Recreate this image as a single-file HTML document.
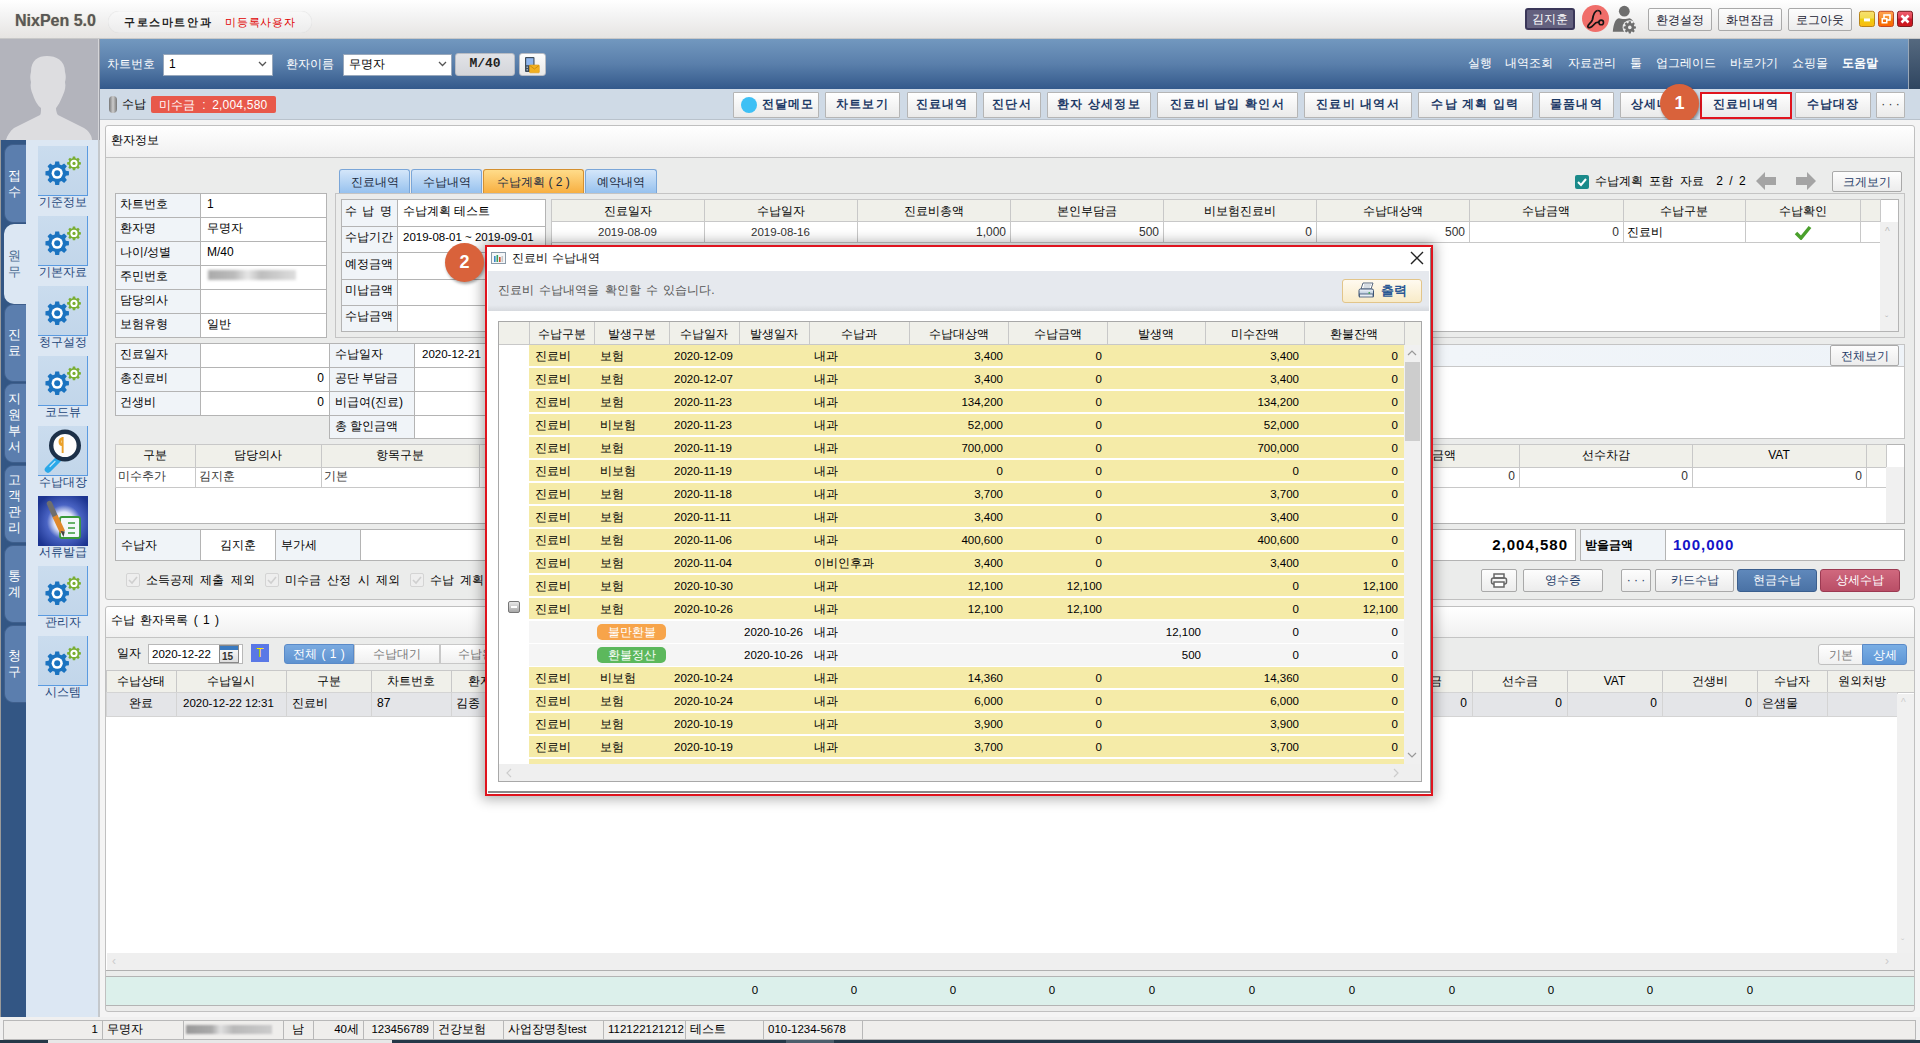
<!DOCTYPE html><html><head><meta charset="utf-8"><style>
*{margin:0;padding:0;box-sizing:border-box}
html,body{width:1920px;height:1043px;overflow:hidden}
body{position:relative;background:#f2f2f2;font-family:"Liberation Sans",sans-serif;font-size:12px;color:#000}
.a{position:absolute}
.t{white-space:nowrap;line-height:16px;height:16px}
.btn{background:linear-gradient(#fdfdfd,#ececec);border:1px solid #a9a9a9;border-radius:2px}
.tb{background:linear-gradient(#ffffff,#eaeaea);border:1px solid #b5b5b5;border-radius:1px}
.tbt{color:#1d3a66;font-weight:bold;font-size:12px;letter-spacing:1.2px}
.cell{border:1px solid #b4b4b4}
.lab{background:#f0f4f8}
.val{background:#fff}
.gh{background:#f0f0ea}
</style></head><body>
<div class="a " style="left:0px;top:0px;width:1920px;height:39px;background:linear-gradient(#ffffff,#f4f4f4 40%,#e6e4e2);border-bottom:1px solid #c8c8c8;"></div>
<div class="a t " style="left:15px;top:13px;font-size:16px;font-weight:bold;color:#585858;text-shadow:0 0 1px #b8a07a;">NixPen 5.0</div>
<div class="a " style="left:108px;top:11px;width:204px;height:22px;background:linear-gradient(#f9f9f9,#ececec);border-radius:11px;box-shadow:inset 0 0 1px #ccc;"></div>
<div class="a t " style="left:124px;top:14px;letter-spacing:1.6px;color:#222;font-size:11px;font-weight:bold;">구로스마트안과</div>
<div class="a t " style="left:225px;top:14px;letter-spacing:0.8px;color:#e00000;font-size:11px;">미등록사용자</div>
<div class="a " style="left:1525px;top:8px;width:50px;height:22px;background:#63607e;border:2px solid #3a3658;border-radius:3px;"></div>
<div class="a t " style="left:1525px;top:11px;width:50px;text-align:center;color:#fff;">김지훈</div>
<div class="a " style="left:1582px;top:5px;width:27px;height:27px;background:#f06e6a;border-radius:50%;"></div>
<svg class="a" style="left:1582px;top:5px" width="27" height="27" viewBox="0 0 27 27"><path d="M15.5 5.5 C12 6.5 11 11 10.5 14.5 C9.5 18 6 19 5.8 21.5 C6 23.5 9 23 11.5 20 C13 18 15 17 17.2 17.2" fill="none" stroke="#141414" stroke-width="1.8"/><path d="M15.5 5.5 C18 5.5 19 7 18.6 9.5" fill="none" stroke="#141414" stroke-width="1.5"/><circle cx="19.2" cy="17.4" r="2.3" fill="none" stroke="#141414" stroke-width="1.6"/></svg>
<svg class="a" style="left:1610px;top:4px" width="30" height="30" viewBox="0 0 30 30"><circle cx="14.3" cy="7.2" r="5.4" fill="#6e6e6e"/><path d="M2.8 27.8 C3.5 19 6 14.5 9 14.2 C11 15.2 17 15.2 19.5 14.2 C22 15 23.5 17 24 19 L19 27.8 Z" fill="#6e6e6e"/><circle cx="19.8" cy="23.4" r="7.2" fill="#ececec"/><path d="M24.23 22.15 L25.92 22.38 L25.92 24.42 L24.23 24.65 L23.81 25.65 L24.84 27.00 L23.40 28.44 L22.05 27.41 L21.05 27.83 L20.82 29.52 L18.78 29.52 L18.55 27.83 L17.55 27.41 L16.20 28.44 L14.76 27.00 L15.79 25.65 L15.37 24.65 L13.68 24.42 L13.68 22.38 L15.37 22.15 L15.79 21.15 L14.76 19.80 L16.20 18.36 L17.55 19.39 L18.55 18.97 L18.78 17.28 L20.82 17.28 L21.05 18.97 L22.05 19.39 L23.40 18.36 L24.84 19.80 L23.81 21.15 Z" fill="#6e6e6e"/><circle cx="19.8" cy="23.4" r="1.8" fill="#ececec"/></svg>
<div class="a btn" style="left:1648px;top:8px;width:64px;height:23px;"></div>
<div class="a t " style="left:1648px;top:11.5px;width:64px;text-align:center;color:#223;">환경설정</div>
<div class="a btn" style="left:1718px;top:8px;width:64px;height:23px;"></div>
<div class="a t " style="left:1718px;top:11.5px;width:64px;text-align:center;color:#223;">화면잠금</div>
<div class="a btn" style="left:1788px;top:8px;width:64px;height:23px;"></div>
<div class="a t " style="left:1788px;top:11.5px;width:64px;text-align:center;color:#223;">로그아웃</div>
<svg class="a" style="left:1858px;top:10px" width="57" height="18" viewBox="0 0 57 18"><defs><linearGradient id="gy" x1="0" y1="0" x2="0" y2="1"><stop offset="0" stop-color="#f8e070"/><stop offset="0.45" stop-color="#f2dc50"/><stop offset="0.5" stop-color="#ecd010"/><stop offset="1" stop-color="#fcb810"/></linearGradient><linearGradient id="go" x1="0" y1="0" x2="0" y2="1"><stop offset="0" stop-color="#ffa050"/><stop offset="0.45" stop-color="#f89030"/><stop offset="0.5" stop-color="#f08010"/><stop offset="1" stop-color="#ff6400"/></linearGradient><linearGradient id="gr" x1="0" y1="0" x2="0" y2="1"><stop offset="0" stop-color="#f06070"/><stop offset="0.45" stop-color="#e04050"/><stop offset="0.5" stop-color="#c81830"/><stop offset="1" stop-color="#d01818"/></linearGradient></defs><rect x="1.5" y="1.3" width="15" height="15.2" rx="2" fill="url(#gy)" stroke="#b8841a"/><rect x="6" y="8.4" width="6" height="3" fill="#fff"/><rect x="20.5" y="1.3" width="15" height="15.2" rx="2" fill="url(#go)" stroke="#c04828"/><rect x="26" y="5" width="6" height="5" fill="none" stroke="#fff" stroke-width="1.6"/><rect x="23.5" y="8" width="6" height="5.5" fill="#fff"/><rect x="25" y="9.5" width="3" height="2.5" fill="#f07010"/><rect x="39.5" y="1.3" width="15" height="15.2" rx="2" fill="url(#gr)" stroke="#7a1c20"/><path d="M43.5 5.5 L50.5 12.5 M50.5 5.5 L43.5 12.5" stroke="#fff" stroke-width="2.6"/></svg>
<div class="a " style="left:0px;top:39px;width:99px;height:101px;background:#b3b4bc;"></div>
<svg class="a" style="left:0px;top:39px" width="99" height="101" viewBox="0 0 99 101"><path d="M47 17 C56 17 65 21 65 33 C66 36 66 40 65 43 C66 47 65 52 63 56 C60 63 58 67 56 69 C56 72 57 75 58 76 L84 89 C89 92 92 97 92 101 L6 101 C7 97 10 92 14 89 L40 76 C41 75 41 72 41 69 C38 67 35 62 33 56 C31 52 30 47 31 43 C30 40 30 36 31 33 C31 21 38 17 47 17 Z" fill="#dddde0"/></svg>
<div class="a " style="left:98px;top:39px;width:1px;height:101px;background:#d4d4d8;"></div>
<div class="a " style="left:99px;top:39px;width:1px;height:101px;background:#9a9ca4;"></div>
<div class="a " style="left:100px;top:39px;width:1808px;height:50px;background:linear-gradient(#7298bf,#5a7fab 50%,#33598b);"></div>
<div class="a " style="left:1908px;top:39px;width:12px;height:50px;background:linear-gradient(#55697f,#2f4560);border-left:1px solid #9aa8b8;"></div>
<div class="a t " style="left:107px;top:56px;color:#fff;">차트번호</div>
<div class="a " style="left:163px;top:54px;width:110px;height:22px;background:#fff;border:1px solid #98a8bc;"></div>
<div class="a t " style="left:169px;top:56px;">1</div>
<svg class="a" style="left:258px;top:61px" width="9" height="6" viewBox="0 0 9 6"><path d="M1 1 L4.5 4.5 L8 1" fill="none" stroke="#555" stroke-width="1.3"/></svg>
<div class="a t " style="left:286px;top:56px;color:#fff;">환자이름</div>
<div class="a " style="left:343px;top:54px;width:109px;height:22px;background:#fff;border:1px solid #98a8bc;"></div>
<div class="a t " style="left:349px;top:56px;">무명자</div>
<svg class="a" style="left:438px;top:61px" width="9" height="6" viewBox="0 0 9 6"><path d="M1 1 L4.5 4.5 L8 1" fill="none" stroke="#555" stroke-width="1.3"/></svg>
<div class="a " style="left:455px;top:53px;width:60px;height:23px;background:linear-gradient(#e2e3e7,#d3d5da);border:1px solid #b8bcc4;border-radius:3px;"></div>
<div class="a t " style="left:455px;top:56px;width:60px;text-align:center;font-family:Liberation Mono,monospace;font-weight:bold;color:#222;font-size:13px;">M/40</div>
<div class="a " style="left:519px;top:53px;width:27px;height:23px;background:linear-gradient(#fdfdfd,#e8e8e8);border:1px solid #b8bcc4;border-radius:3px;"></div>
<svg class="a" style="left:524px;top:56px" width="17" height="18" viewBox="0 0 17 18"><rect x="1" y="1" width="9.5" height="15" rx="1" fill="#3e4c5a"/><rect x="2.2" y="2.2" width="7.2" height="7" fill="#8fb6ee"/><rect x="2.5" y="10.5" width="1.5" height="1.5" fill="#9ab"/><rect x="2.5" y="13" width="1.5" height="1.5" fill="#9ab"/><rect x="5.5" y="9" width="9.8" height="7.8" rx="0.8" fill="#f2b020" stroke="#e09a10" stroke-width="0.6"/><path d="M5.8 9.5 L10.4 13 L15 9.5" fill="none" stroke="#c88a10" stroke-width="0.9"/></svg>
<div class="a t " style="left:1468px;top:55px;color:#fff;">실행</div>
<div class="a t " style="left:1505px;top:55px;color:#fff;">내역조회</div>
<div class="a t " style="left:1568px;top:55px;color:#fff;">자료관리</div>
<div class="a t " style="left:1630px;top:55px;color:#fff;">툴</div>
<div class="a t " style="left:1656px;top:55px;color:#fff;">업그레이드</div>
<div class="a t " style="left:1730px;top:55px;color:#fff;">바로가기</div>
<div class="a t " style="left:1792px;top:55px;color:#fff;">쇼핑몰</div>
<div class="a t " style="left:1842px;top:55px;color:#fff;font-weight:bold;">도움말</div>
<div class="a " style="left:100px;top:89px;width:1820px;height:31px;background:#cfdae6;border-bottom:1px solid #b9c2cc;"></div>
<div class="a " style="left:109px;top:96px;width:8px;height:17px;background:linear-gradient(90deg,#777,#ccc,#777);border-radius:4px;"></div>
<div class="a t " style="left:122px;top:96px;">수납</div>
<div class="a " style="left:151px;top:96px;width:125px;height:17px;background:#e8584a;border-radius:2px;"></div>
<div class="a t " style="left:159px;top:96.5px;color:#fff;letter-spacing:0.2px;word-spacing:3px;">미수금 : 2,004,580</div>
<div class="a tb" style="left:733px;top:92px;width:86px;height:26px;"></div>
<div class="a " style="left:741px;top:97px;width:16px;height:16px;background:#3ec0f5;border-radius:50%;"></div>
<div class="a t tbt" style="left:757px;top:96px;width:62px;text-align:center;">전달메모</div>
<div class="a tb" style="left:825px;top:92px;width:75px;height:26px;"></div>
<div class="a t tbt" style="left:825px;top:96px;width:75px;text-align:center;">차트보기</div>
<div class="a tb" style="left:907px;top:92px;width:70px;height:26px;"></div>
<div class="a t tbt" style="left:907px;top:96px;width:70px;text-align:center;">진료내역</div>
<div class="a tb" style="left:983px;top:92px;width:58px;height:26px;"></div>
<div class="a t tbt" style="left:983px;top:96px;width:58px;text-align:center;">진단서</div>
<div class="a tb" style="left:1047px;top:92px;width:104px;height:26px;"></div>
<div class="a t tbt" style="left:1047px;top:96px;width:104px;text-align:center;">환자 상세정보</div>
<div class="a tb" style="left:1157px;top:92px;width:141px;height:26px;"></div>
<div class="a t tbt" style="left:1157px;top:96px;width:141px;text-align:center;">진료비 납입 확인서</div>
<div class="a tb" style="left:1304px;top:92px;width:108px;height:26px;"></div>
<div class="a t tbt" style="left:1304px;top:96px;width:108px;text-align:center;">진료비 내역서</div>
<div class="a tb" style="left:1418px;top:92px;width:115px;height:26px;"></div>
<div class="a t tbt" style="left:1418px;top:96px;width:115px;text-align:center;">수납 계획 입력</div>
<div class="a tb" style="left:1539px;top:92px;width:75px;height:26px;"></div>
<div class="a t tbt" style="left:1539px;top:96px;width:75px;text-align:center;">물품내역</div>
<div class="a tb" style="left:1620px;top:92px;width:74px;height:26px;"></div>
<div class="a t tbt" style="left:1620px;top:96px;width:74px;text-align:center;">상세내역</div>
<div class="a tb" style="left:1700px;top:92px;width:92px;height:26px;"></div>
<div class="a t tbt" style="left:1700px;top:96px;width:92px;text-align:center;">진료비내역</div>
<div class="a tb" style="left:1795px;top:92px;width:76px;height:26px;"></div>
<div class="a t tbt" style="left:1795px;top:96px;width:76px;text-align:center;">수납대장</div>
<div class="a tb" style="left:1876px;top:92px;width:29px;height:26px;"></div>
<div class="a t " style="left:1876px;top:96px;width:29px;text-align:center;color:#333;">· · ·</div>
<div class="a " style="left:1700px;top:92px;width:92px;height:27px;border:2px solid #e0141e;"></div>
<div class="a " style="left:1660px;top:84px;width:39px;height:39px;background:#d9623b;border-radius:50%;box-shadow:1px 2px 3px rgba(0,0,0,.35);"></div>
<div class="a t " style="left:1660px;top:95px;width:39px;text-align:center;color:#fff;font-weight:bold;font-size:18px;">1</div>
<div class="a " style="left:0px;top:140px;width:100px;height:877px;background:#dce7f3;"></div>
<div class="a " style="left:0px;top:140px;width:26px;height:877px;background:#335684;"></div>
<div class="a " style="left:0px;top:140px;width:1px;height:877px;background:#9a9a9a;"></div>
<div class="a " style="left:98px;top:140px;width:2px;height:877px;background:#c4c8cc;"></div>
<div class="a " style="left:4px;top:144px;width:22px;height:79px;background:#5b7eae;border:1px solid #3f5f8c;border-right:none;border-radius:9px 0 0 9px;"></div>
<div class="a" style="left:3px;top:167.5px;width:23px;text-align:center;line-height:16px;color:#fff;font-size:13px">접<br>수</div>
<div class="a " style="left:4px;top:224px;width:94px;height:80px;background:#dce7f3;border-radius:10px 0 0 10px;"></div>
<div class="a" style="left:3px;top:248.0px;width:23px;text-align:center;line-height:16px;color:#4a6a90;font-size:13px">원<br>무</div>
<div class="a " style="left:4px;top:304px;width:22px;height:78px;background:#5b7eae;border:1px solid #3f5f8c;border-right:none;border-radius:9px 0 0 9px;"></div>
<div class="a" style="left:3px;top:327.0px;width:23px;text-align:center;line-height:16px;color:#fff;font-size:13px">진<br>료</div>
<div class="a " style="left:4px;top:383px;width:22px;height:80px;background:#5b7eae;border:1px solid #3f5f8c;border-right:none;border-radius:9px 0 0 9px;"></div>
<div class="a" style="left:3px;top:391.0px;width:23px;text-align:center;line-height:16px;color:#fff;font-size:13px">지<br>원<br>부<br>서</div>
<div class="a " style="left:4px;top:465px;width:22px;height:78px;background:#5b7eae;border:1px solid #3f5f8c;border-right:none;border-radius:9px 0 0 9px;"></div>
<div class="a" style="left:3px;top:472.0px;width:23px;text-align:center;line-height:16px;color:#fff;font-size:13px">고<br>객<br>관<br>리</div>
<div class="a " style="left:4px;top:545px;width:22px;height:78px;background:#5b7eae;border:1px solid #3f5f8c;border-right:none;border-radius:9px 0 0 9px;"></div>
<div class="a" style="left:3px;top:568.0px;width:23px;text-align:center;line-height:16px;color:#fff;font-size:13px">통<br>계</div>
<div class="a " style="left:4px;top:625px;width:22px;height:78px;background:#5b7eae;border:1px solid #3f5f8c;border-right:none;border-radius:9px 0 0 9px;"></div>
<div class="a" style="left:3px;top:648.0px;width:23px;text-align:center;line-height:16px;color:#fff;font-size:13px">청<br>구</div>
<div class="a " style="left:38px;top:146px;width:50px;height:50px;background:linear-gradient(#cadcee,#c2d6ea);border-right:1px solid #5a9ae0;border-bottom:1px solid #5a9ae0;"></div>
<svg class="a" style="left:38px;top:146px" width="50" height="48" viewBox="0 0 50 48"><path d="M27.86 24.76 L30.94 25.25 L30.94 29.15 L27.86 29.64 L27.05 31.60 L28.88 34.12 L26.12 36.88 L23.60 35.05 L21.64 35.86 L21.15 38.94 L17.25 38.94 L16.76 35.86 L14.80 35.05 L12.28 36.88 L9.52 34.12 L11.35 31.60 L10.54 29.64 L7.46 29.15 L7.46 25.25 L10.54 24.76 L11.35 22.80 L9.52 20.28 L12.28 17.52 L14.80 19.35 L16.76 18.54 L17.25 15.46 L21.15 15.46 L21.64 18.54 L23.60 19.35 L26.12 17.52 L28.88 20.28 L27.05 22.80 Z" fill="#1a73c0"/><circle cx="19.2" cy="27.2" r="5.6" fill="#fff"/><circle cx="19.2" cy="27.2" r="3" fill="#1a73c0"/><path d="M41.20 15.93 L42.91 16.25 L42.91 18.55 L41.20 18.87 L40.71 20.04 L41.70 21.47 L40.07 23.10 L38.64 22.11 L37.47 22.60 L37.15 24.31 L34.85 24.31 L34.53 22.60 L33.36 22.11 L31.93 23.10 L30.30 21.47 L31.29 20.04 L30.80 18.87 L29.09 18.55 L29.09 16.25 L30.80 15.93 L31.29 14.76 L30.30 13.33 L31.93 11.70 L33.36 12.69 L34.53 12.20 L34.85 10.49 L37.15 10.49 L37.47 12.20 L38.64 12.69 L40.07 11.70 L41.70 13.33 L40.71 14.76 Z" fill="#7aae32"/><circle cx="36" cy="17.4" r="3.6" fill="#fff"/><circle cx="36" cy="17.4" r="1.6" fill="#7aae32"/></svg>
<div class="a t " style="left:30px;top:194px;width:66px;text-align:center;color:#24467a;font-size:12px;">기준정보</div>
<div class="a " style="left:38px;top:216px;width:50px;height:50px;background:linear-gradient(#cadcee,#c2d6ea);border-right:1px solid #5a9ae0;border-bottom:1px solid #5a9ae0;"></div>
<svg class="a" style="left:38px;top:216px" width="50" height="48" viewBox="0 0 50 48"><path d="M27.86 24.76 L30.94 25.25 L30.94 29.15 L27.86 29.64 L27.05 31.60 L28.88 34.12 L26.12 36.88 L23.60 35.05 L21.64 35.86 L21.15 38.94 L17.25 38.94 L16.76 35.86 L14.80 35.05 L12.28 36.88 L9.52 34.12 L11.35 31.60 L10.54 29.64 L7.46 29.15 L7.46 25.25 L10.54 24.76 L11.35 22.80 L9.52 20.28 L12.28 17.52 L14.80 19.35 L16.76 18.54 L17.25 15.46 L21.15 15.46 L21.64 18.54 L23.60 19.35 L26.12 17.52 L28.88 20.28 L27.05 22.80 Z" fill="#1a73c0"/><circle cx="19.2" cy="27.2" r="5.6" fill="#fff"/><circle cx="19.2" cy="27.2" r="3" fill="#1a73c0"/><path d="M41.20 15.93 L42.91 16.25 L42.91 18.55 L41.20 18.87 L40.71 20.04 L41.70 21.47 L40.07 23.10 L38.64 22.11 L37.47 22.60 L37.15 24.31 L34.85 24.31 L34.53 22.60 L33.36 22.11 L31.93 23.10 L30.30 21.47 L31.29 20.04 L30.80 18.87 L29.09 18.55 L29.09 16.25 L30.80 15.93 L31.29 14.76 L30.30 13.33 L31.93 11.70 L33.36 12.69 L34.53 12.20 L34.85 10.49 L37.15 10.49 L37.47 12.20 L38.64 12.69 L40.07 11.70 L41.70 13.33 L40.71 14.76 Z" fill="#7aae32"/><circle cx="36" cy="17.4" r="3.6" fill="#fff"/><circle cx="36" cy="17.4" r="1.6" fill="#7aae32"/></svg>
<div class="a t " style="left:30px;top:264px;width:66px;text-align:center;color:#24467a;font-size:12px;">기본자료</div>
<div class="a " style="left:38px;top:286px;width:50px;height:50px;background:linear-gradient(#cadcee,#c2d6ea);border-right:1px solid #5a9ae0;border-bottom:1px solid #5a9ae0;"></div>
<svg class="a" style="left:38px;top:286px" width="50" height="48" viewBox="0 0 50 48"><path d="M27.86 24.76 L30.94 25.25 L30.94 29.15 L27.86 29.64 L27.05 31.60 L28.88 34.12 L26.12 36.88 L23.60 35.05 L21.64 35.86 L21.15 38.94 L17.25 38.94 L16.76 35.86 L14.80 35.05 L12.28 36.88 L9.52 34.12 L11.35 31.60 L10.54 29.64 L7.46 29.15 L7.46 25.25 L10.54 24.76 L11.35 22.80 L9.52 20.28 L12.28 17.52 L14.80 19.35 L16.76 18.54 L17.25 15.46 L21.15 15.46 L21.64 18.54 L23.60 19.35 L26.12 17.52 L28.88 20.28 L27.05 22.80 Z" fill="#1a73c0"/><circle cx="19.2" cy="27.2" r="5.6" fill="#fff"/><circle cx="19.2" cy="27.2" r="3" fill="#1a73c0"/><path d="M41.20 15.93 L42.91 16.25 L42.91 18.55 L41.20 18.87 L40.71 20.04 L41.70 21.47 L40.07 23.10 L38.64 22.11 L37.47 22.60 L37.15 24.31 L34.85 24.31 L34.53 22.60 L33.36 22.11 L31.93 23.10 L30.30 21.47 L31.29 20.04 L30.80 18.87 L29.09 18.55 L29.09 16.25 L30.80 15.93 L31.29 14.76 L30.30 13.33 L31.93 11.70 L33.36 12.69 L34.53 12.20 L34.85 10.49 L37.15 10.49 L37.47 12.20 L38.64 12.69 L40.07 11.70 L41.70 13.33 L40.71 14.76 Z" fill="#7aae32"/><circle cx="36" cy="17.4" r="3.6" fill="#fff"/><circle cx="36" cy="17.4" r="1.6" fill="#7aae32"/></svg>
<div class="a t " style="left:30px;top:334px;width:66px;text-align:center;color:#24467a;font-size:12px;">청구설정</div>
<div class="a " style="left:38px;top:356px;width:50px;height:50px;background:linear-gradient(#cadcee,#c2d6ea);border-right:1px solid #5a9ae0;border-bottom:1px solid #5a9ae0;"></div>
<svg class="a" style="left:38px;top:356px" width="50" height="48" viewBox="0 0 50 48"><path d="M27.86 24.76 L30.94 25.25 L30.94 29.15 L27.86 29.64 L27.05 31.60 L28.88 34.12 L26.12 36.88 L23.60 35.05 L21.64 35.86 L21.15 38.94 L17.25 38.94 L16.76 35.86 L14.80 35.05 L12.28 36.88 L9.52 34.12 L11.35 31.60 L10.54 29.64 L7.46 29.15 L7.46 25.25 L10.54 24.76 L11.35 22.80 L9.52 20.28 L12.28 17.52 L14.80 19.35 L16.76 18.54 L17.25 15.46 L21.15 15.46 L21.64 18.54 L23.60 19.35 L26.12 17.52 L28.88 20.28 L27.05 22.80 Z" fill="#1a73c0"/><circle cx="19.2" cy="27.2" r="5.6" fill="#fff"/><circle cx="19.2" cy="27.2" r="3" fill="#1a73c0"/><path d="M41.20 15.93 L42.91 16.25 L42.91 18.55 L41.20 18.87 L40.71 20.04 L41.70 21.47 L40.07 23.10 L38.64 22.11 L37.47 22.60 L37.15 24.31 L34.85 24.31 L34.53 22.60 L33.36 22.11 L31.93 23.10 L30.30 21.47 L31.29 20.04 L30.80 18.87 L29.09 18.55 L29.09 16.25 L30.80 15.93 L31.29 14.76 L30.30 13.33 L31.93 11.70 L33.36 12.69 L34.53 12.20 L34.85 10.49 L37.15 10.49 L37.47 12.20 L38.64 12.69 L40.07 11.70 L41.70 13.33 L40.71 14.76 Z" fill="#7aae32"/><circle cx="36" cy="17.4" r="3.6" fill="#fff"/><circle cx="36" cy="17.4" r="1.6" fill="#7aae32"/></svg>
<div class="a t " style="left:30px;top:404px;width:66px;text-align:center;color:#24467a;font-size:12px;">코드뷰</div>
<div class="a " style="left:38px;top:426px;width:50px;height:50px;background:linear-gradient(#cadcee,#c2d6ea);border-right:1px solid #5a9ae0;border-bottom:1px solid #5a9ae0;"></div>
<svg class="a" style="left:38px;top:426px" width="50" height="50" viewBox="0 0 50 50"><path d="M20.5 33 L10 43.5" stroke="#2aa8e8" stroke-width="6.5" stroke-linecap="round"/><path d="M12 40.5 L17 35.5" stroke="#bfe6fa" stroke-width="1.2" stroke-linecap="round"/><circle cx="27" cy="19.5" r="13.8" fill="#fdfdfd" stroke="#1c3048" stroke-width="4.4"/><path d="M24.5 12.5 C21 13 21 18.5 24.5 19 C27 19.5 27 24 24 24.5 M25 11 V27" fill="none" stroke="#eaa028" stroke-width="2.6"/><rect x="25.6" y="10" width="6" height="18" fill="#fdfdfd"/></svg>
<div class="a t " style="left:30px;top:474px;width:66px;text-align:center;color:#24467a;font-size:12px;">수납대장</div>
<div class="a " style="left:38px;top:496px;width:50px;height:50px;background:linear-gradient(#cadcee,#c2d6ea);border-right:1px solid #5a9ae0;border-bottom:1px solid #5a9ae0;"></div>
<svg class="a" style="left:38px;top:496px" width="50" height="50" viewBox="0 0 50 50"><defs><radialGradient id="rg" cx="52%" cy="52%" r="62%"><stop offset="0" stop-color="#ffffff"/><stop offset="0.32" stop-color="#dde4f8"/><stop offset="0.55" stop-color="#4a64c4"/><stop offset="1" stop-color="#1c3490"/></radialGradient></defs><rect width="50" height="50" fill="url(#rg)"/><rect x="22" y="21" width="20" height="21" rx="2" fill="#f2f8fa" stroke="#3a9a3a" stroke-width="1.8"/><path d="M30 27 H37 M30 32 H37 M30 37 H37" stroke="#3a9a3a" stroke-width="1.6"/><path d="M11.5 7.5 L17 20" stroke="#6e6e6e" stroke-width="5.5" stroke-linecap="round"/><path d="M17 20 L24.5 36" stroke="#e0882c" stroke-width="5.5"/><path d="M22.5 35 L25.5 41 L26.8 35.5 Z" fill="#444"/></svg>
<div class="a t " style="left:30px;top:544px;width:66px;text-align:center;color:#24467a;font-size:12px;">서류발급</div>
<div class="a " style="left:38px;top:566px;width:50px;height:50px;background:linear-gradient(#cadcee,#c2d6ea);border-right:1px solid #5a9ae0;border-bottom:1px solid #5a9ae0;"></div>
<svg class="a" style="left:38px;top:566px" width="50" height="48" viewBox="0 0 50 48"><path d="M27.86 24.76 L30.94 25.25 L30.94 29.15 L27.86 29.64 L27.05 31.60 L28.88 34.12 L26.12 36.88 L23.60 35.05 L21.64 35.86 L21.15 38.94 L17.25 38.94 L16.76 35.86 L14.80 35.05 L12.28 36.88 L9.52 34.12 L11.35 31.60 L10.54 29.64 L7.46 29.15 L7.46 25.25 L10.54 24.76 L11.35 22.80 L9.52 20.28 L12.28 17.52 L14.80 19.35 L16.76 18.54 L17.25 15.46 L21.15 15.46 L21.64 18.54 L23.60 19.35 L26.12 17.52 L28.88 20.28 L27.05 22.80 Z" fill="#1a73c0"/><circle cx="19.2" cy="27.2" r="5.6" fill="#fff"/><circle cx="19.2" cy="27.2" r="3" fill="#1a73c0"/><path d="M41.20 15.93 L42.91 16.25 L42.91 18.55 L41.20 18.87 L40.71 20.04 L41.70 21.47 L40.07 23.10 L38.64 22.11 L37.47 22.60 L37.15 24.31 L34.85 24.31 L34.53 22.60 L33.36 22.11 L31.93 23.10 L30.30 21.47 L31.29 20.04 L30.80 18.87 L29.09 18.55 L29.09 16.25 L30.80 15.93 L31.29 14.76 L30.30 13.33 L31.93 11.70 L33.36 12.69 L34.53 12.20 L34.85 10.49 L37.15 10.49 L37.47 12.20 L38.64 12.69 L40.07 11.70 L41.70 13.33 L40.71 14.76 Z" fill="#7aae32"/><circle cx="36" cy="17.4" r="3.6" fill="#fff"/><circle cx="36" cy="17.4" r="1.6" fill="#7aae32"/></svg>
<div class="a t " style="left:30px;top:614px;width:66px;text-align:center;color:#24467a;font-size:12px;">관리자</div>
<div class="a " style="left:38px;top:636px;width:50px;height:50px;background:linear-gradient(#cadcee,#c2d6ea);border-right:1px solid #5a9ae0;border-bottom:1px solid #5a9ae0;"></div>
<svg class="a" style="left:38px;top:636px" width="50" height="48" viewBox="0 0 50 48"><path d="M27.86 24.76 L30.94 25.25 L30.94 29.15 L27.86 29.64 L27.05 31.60 L28.88 34.12 L26.12 36.88 L23.60 35.05 L21.64 35.86 L21.15 38.94 L17.25 38.94 L16.76 35.86 L14.80 35.05 L12.28 36.88 L9.52 34.12 L11.35 31.60 L10.54 29.64 L7.46 29.15 L7.46 25.25 L10.54 24.76 L11.35 22.80 L9.52 20.28 L12.28 17.52 L14.80 19.35 L16.76 18.54 L17.25 15.46 L21.15 15.46 L21.64 18.54 L23.60 19.35 L26.12 17.52 L28.88 20.28 L27.05 22.80 Z" fill="#1a73c0"/><circle cx="19.2" cy="27.2" r="5.6" fill="#fff"/><circle cx="19.2" cy="27.2" r="3" fill="#1a73c0"/><path d="M41.20 15.93 L42.91 16.25 L42.91 18.55 L41.20 18.87 L40.71 20.04 L41.70 21.47 L40.07 23.10 L38.64 22.11 L37.47 22.60 L37.15 24.31 L34.85 24.31 L34.53 22.60 L33.36 22.11 L31.93 23.10 L30.30 21.47 L31.29 20.04 L30.80 18.87 L29.09 18.55 L29.09 16.25 L30.80 15.93 L31.29 14.76 L30.30 13.33 L31.93 11.70 L33.36 12.69 L34.53 12.20 L34.85 10.49 L37.15 10.49 L37.47 12.20 L38.64 12.69 L40.07 11.70 L41.70 13.33 L40.71 14.76 Z" fill="#7aae32"/><circle cx="36" cy="17.4" r="3.6" fill="#fff"/><circle cx="36" cy="17.4" r="1.6" fill="#7aae32"/></svg>
<div class="a t " style="left:30px;top:684px;width:66px;text-align:center;color:#24467a;font-size:12px;">시스템</div>
<div class="a " style="left:100px;top:120px;width:1820px;height:897px;background:#f4f4f4;"></div>
<div class="a " style="left:105px;top:125px;width:1810px;height:475px;background:#ebeceb;border:1px solid #c0c0c0;border-radius:3px;"></div>
<div class="a " style="left:106px;top:126px;width:1808px;height:32px;background:linear-gradient(#ffffff,#f0f0f0);border-bottom:1px solid #c4c4c4;border-radius:3px 3px 0 0;"></div>
<div class="a t " style="left:111px;top:132px;">환자정보</div>
<div class="a " style="left:339px;top:169px;width:71px;height:25px;background:linear-gradient(#d4e6fa,#94c0ee);border:1px solid #7aa6d8;border-bottom:none;border-radius:3px 3px 0 0;"></div>
<div class="a t " style="left:339px;top:174px;width:71px;text-align:center;color:#1a2a40;">진료내역</div>
<div class="a " style="left:411px;top:169px;width:71px;height:25px;background:linear-gradient(#d4e6fa,#94c0ee);border:1px solid #7aa6d8;border-bottom:none;border-radius:3px 3px 0 0;"></div>
<div class="a t " style="left:411px;top:174px;width:71px;text-align:center;color:#1a2a40;">수납내역</div>
<div class="a " style="left:483px;top:169px;width:101px;height:25px;background:linear-gradient(#ffdc8a,#f7ad3e);border:1px solid #d49030;border-bottom:none;border-radius:3px 3px 0 0;"></div>
<div class="a t " style="left:483px;top:174px;width:101px;text-align:center;color:#1a2a40;">수납계획 ( 2 )</div>
<div class="a " style="left:585px;top:169px;width:72px;height:25px;background:linear-gradient(#d4e6fa,#94c0ee);border:1px solid #7aa6d8;border-bottom:none;border-radius:3px 3px 0 0;"></div>
<div class="a t " style="left:585px;top:174px;width:72px;text-align:center;color:#1a2a40;">예약내역</div>
<div class="a " style="left:335px;top:193px;width:1570px;height:145px;border:1px solid #c4c4c4;background:#ebeceb;"></div>
<div class="a cell lab" style="left:115px;top:193px;width:86px;height:25px;"></div>
<div class="a cell val" style="left:200px;top:193px;width:127px;height:25px;"></div>
<div class="a t " style="left:120px;top:196px;">차트번호</div>
<div class="a t " style="left:207px;top:196px;">1</div>
<div class="a cell lab" style="left:115px;top:217px;width:86px;height:25px;"></div>
<div class="a cell val" style="left:200px;top:217px;width:127px;height:25px;"></div>
<div class="a t " style="left:120px;top:220px;">환자명</div>
<div class="a t " style="left:207px;top:220px;">무명자</div>
<div class="a cell lab" style="left:115px;top:241px;width:86px;height:25px;"></div>
<div class="a cell val" style="left:200px;top:241px;width:127px;height:25px;"></div>
<div class="a t " style="left:120px;top:244px;">나이/성별</div>
<div class="a t " style="left:207px;top:244px;">M/40</div>
<div class="a cell lab" style="left:115px;top:265px;width:86px;height:25px;"></div>
<div class="a cell val" style="left:200px;top:265px;width:127px;height:25px;"></div>
<div class="a t " style="left:120px;top:268px;">주민번호</div>
<div class="a cell lab" style="left:115px;top:289px;width:86px;height:25px;"></div>
<div class="a cell val" style="left:200px;top:289px;width:127px;height:25px;"></div>
<div class="a t " style="left:120px;top:292px;">담당의사</div>
<div class="a cell lab" style="left:115px;top:313px;width:86px;height:25px;"></div>
<div class="a cell val" style="left:200px;top:313px;width:127px;height:25px;"></div>
<div class="a t " style="left:120px;top:316px;">보험유형</div>
<div class="a t " style="left:207px;top:316px;">일반</div>
<div class="a " style="left:208px;top:270px;width:88px;height:10px;background:linear-gradient(90deg,#aaa 0,#bbb 30%,#e6e6e6 45%,#bdbdbd 60%,#ddd 100%);filter:blur(1.5px);"></div>
<div class="a cell lab" style="left:341px;top:199px;width:57px;height:28px;"></div>
<div class="a cell val" style="left:397px;top:199px;width:149px;height:28px;"></div>
<div class="a t " style="left:345px;top:202.5px;word-spacing:2px;">수 납 명</div>
<div class="a t " style="left:403px;top:202.5px;font-size:11.5px;">수납계획 테스트</div>
<div class="a cell lab" style="left:341px;top:226px;width:57px;height:27px;"></div>
<div class="a cell val" style="left:397px;top:226px;width:149px;height:27px;"></div>
<div class="a t " style="left:345px;top:229.0px;letter-spacing:0px;">수납기간</div>
<div class="a t " style="left:403px;top:229.0px;font-size:11.5px;">2019-08-01 ~ 2019-09-01</div>
<div class="a cell lab" style="left:341px;top:252px;width:57px;height:28px;"></div>
<div class="a cell val" style="left:397px;top:252px;width:149px;height:28px;"></div>
<div class="a t " style="left:345px;top:255.5px;letter-spacing:0px;">예정금액</div>
<div class="a cell lab" style="left:341px;top:279px;width:57px;height:27px;"></div>
<div class="a cell val" style="left:397px;top:279px;width:149px;height:27px;"></div>
<div class="a t " style="left:345px;top:282.0px;letter-spacing:0px;">미납금액</div>
<div class="a cell lab" style="left:341px;top:305px;width:57px;height:27px;"></div>
<div class="a cell val" style="left:397px;top:305px;width:149px;height:27px;"></div>
<div class="a t " style="left:345px;top:308.0px;letter-spacing:0px;">수납금액</div>
<div class="a " style="left:551px;top:199px;width:1348px;height:133px;background:#fff;border:1px solid #b4b4b4;"></div>
<div class="a " style="left:551px;top:199px;width:1329px;height:23px;background:#f0f0ea;border:1px solid #b4b4b4;"></div>
<div class="a " style="left:551px;top:199px;width:154px;height:23px;border:1px solid #c8c8c8;background:#f0f0ea;"></div>
<div class="a " style="left:551px;top:221px;width:154px;height:22px;border:1px solid #c8c8c8;background:#fff;"></div>
<div class="a t " style="left:551px;top:202.5px;width:153px;text-align:center;">진료일자</div>
<div class="a " style="left:704px;top:199px;width:154px;height:23px;border:1px solid #c8c8c8;background:#f0f0ea;"></div>
<div class="a " style="left:704px;top:221px;width:154px;height:22px;border:1px solid #c8c8c8;background:#fff;"></div>
<div class="a t " style="left:704px;top:202.5px;width:153px;text-align:center;">수납일자</div>
<div class="a " style="left:857px;top:199px;width:154px;height:23px;border:1px solid #c8c8c8;background:#f0f0ea;"></div>
<div class="a " style="left:857px;top:221px;width:154px;height:22px;border:1px solid #c8c8c8;background:#fff;"></div>
<div class="a t " style="left:857px;top:202.5px;width:153px;text-align:center;">진료비총액</div>
<div class="a " style="left:1010px;top:199px;width:154px;height:23px;border:1px solid #c8c8c8;background:#f0f0ea;"></div>
<div class="a " style="left:1010px;top:221px;width:154px;height:22px;border:1px solid #c8c8c8;background:#fff;"></div>
<div class="a t " style="left:1010px;top:202.5px;width:153px;text-align:center;">본인부담금</div>
<div class="a " style="left:1163px;top:199px;width:154px;height:23px;border:1px solid #c8c8c8;background:#f0f0ea;"></div>
<div class="a " style="left:1163px;top:221px;width:154px;height:22px;border:1px solid #c8c8c8;background:#fff;"></div>
<div class="a t " style="left:1163px;top:202.5px;width:153px;text-align:center;">비보험진료비</div>
<div class="a " style="left:1316px;top:199px;width:154px;height:23px;border:1px solid #c8c8c8;background:#f0f0ea;"></div>
<div class="a " style="left:1316px;top:221px;width:154px;height:22px;border:1px solid #c8c8c8;background:#fff;"></div>
<div class="a t " style="left:1316px;top:202.5px;width:153px;text-align:center;">수납대상액</div>
<div class="a " style="left:1469px;top:199px;width:155px;height:23px;border:1px solid #c8c8c8;background:#f0f0ea;"></div>
<div class="a " style="left:1469px;top:221px;width:155px;height:22px;border:1px solid #c8c8c8;background:#fff;"></div>
<div class="a t " style="left:1469px;top:202.5px;width:154px;text-align:center;">수납금액</div>
<div class="a " style="left:1623px;top:199px;width:123px;height:23px;border:1px solid #c8c8c8;background:#f0f0ea;"></div>
<div class="a " style="left:1623px;top:221px;width:123px;height:22px;border:1px solid #c8c8c8;background:#fff;"></div>
<div class="a t " style="left:1623px;top:202.5px;width:122px;text-align:center;">수납구분</div>
<div class="a " style="left:1745px;top:199px;width:116px;height:23px;border:1px solid #c8c8c8;background:#f0f0ea;"></div>
<div class="a " style="left:1745px;top:221px;width:116px;height:22px;border:1px solid #c8c8c8;background:#fff;"></div>
<div class="a t " style="left:1745px;top:202.5px;width:115px;text-align:center;">수납확인</div>
<div class="a " style="left:1860px;top:199px;width:21px;height:23px;border:1px solid #c8c8c8;background:#f0f0ea;"></div>
<div class="a " style="left:1860px;top:221px;width:21px;height:22px;border:1px solid #c8c8c8;background:#fff;"></div>
<div class="a t " style="left:1860px;top:202.5px;width:20px;text-align:center;"></div>
<div class="a t " style="left:551px;top:224px;width:153px;text-align:center;color:#333;font-size:11.5px;">2019-08-09</div>
<div class="a t " style="left:704px;top:224px;width:153px;text-align:center;color:#333;font-size:11.5px;">2019-08-16</div>
<div class="a t " style="right:914px;top:224px;text-align:right;color:#333;">1,000</div>
<div class="a t " style="right:761px;top:224px;text-align:right;color:#333;">500</div>
<div class="a t " style="right:608px;top:224px;text-align:right;color:#333;">0</div>
<div class="a t " style="right:455px;top:224px;text-align:right;color:#333;">500</div>
<div class="a t " style="right:301px;top:224px;text-align:right;color:#333;">0</div>
<div class="a t " style="left:1627px;top:224px;">진료비</div>
<svg class="a" style="left:1794px;top:225px" width="18" height="15" viewBox="0 0 18 15"><path d="M2 8 L7 13 L16 2" fill="none" stroke="#4aa02c" stroke-width="3.5"/></svg>
<div class="a " style="left:1880px;top:222px;width:18px;height:109px;background:#f0f0f0;"></div>
<div class="a t " style="left:1885px;top:224px;color:#bbb;font-size:10px;">^</div>
<div class="a t " style="left:1885px;top:313px;color:#bbb;font-size:10px;">ˇ</div>
<div class="a " style="left:1575px;top:175px;width:14px;height:14px;background:#1a8a8a;border-radius:2px;"><svg width="14" height="14" viewBox="0 0 14 14"><path d="M3 7 L6 10 L11 4" fill="none" stroke="#fff" stroke-width="2"/></svg></div>
<div class="a t " style="left:1595px;top:173px;word-spacing:3px;">수납계획 포함 자료 &nbsp;2 / 2</div>
<svg class="a" style="left:1755px;top:171px" width="22" height="20" viewBox="0 0 22 20"><path d="M1 10 L10 1 L10 6 L21 6 L21 14 L10 14 L10 19 Z" fill="#a4a4a4"/></svg>
<svg class="a" style="left:1795px;top:171px" width="22" height="20" viewBox="0 0 22 20"><path d="M21 10 L12 1 L12 6 L1 6 L1 14 L12 14 L12 19 Z" fill="#a4a4a4"/></svg>
<div class="a btn" style="left:1832px;top:171px;width:70px;height:21px;"></div>
<div class="a t " style="left:1832px;top:173.5px;width:70px;text-align:center;color:#1d3a66;">크게보기</div>
<div class="a cell lab" style="left:115px;top:343px;width:86px;height:25px;"></div>
<div class="a t " style="left:120px;top:346px;">진료일자</div>
<div class="a cell val" style="left:200px;top:343px;width:130px;height:25px;"></div>
<div class="a cell lab" style="left:329px;top:343px;width:86px;height:25px;"></div>
<div class="a t " style="left:335px;top:346px;">수납일자</div>
<div class="a cell val" style="left:414px;top:343px;width:132px;height:25px;"></div>
<div class="a t " style="left:422px;top:346px;font-size:11.5px;">2020-12-21</div>
<div class="a cell lab" style="left:115px;top:367px;width:86px;height:25px;"></div>
<div class="a t " style="left:120px;top:370px;">총진료비</div>
<div class="a cell val" style="left:200px;top:367px;width:130px;height:25px;"></div>
<div class="a t " style="right:1596px;top:370px;text-align:right;">0</div>
<div class="a cell lab" style="left:329px;top:367px;width:86px;height:25px;"></div>
<div class="a t " style="left:335px;top:370px;">공단 부담금</div>
<div class="a cell val" style="left:414px;top:367px;width:132px;height:25px;"></div>
<div class="a cell lab" style="left:115px;top:391px;width:86px;height:25px;"></div>
<div class="a t " style="left:120px;top:394px;">건생비</div>
<div class="a cell val" style="left:200px;top:391px;width:130px;height:25px;"></div>
<div class="a t " style="right:1596px;top:394px;text-align:right;">0</div>
<div class="a cell lab" style="left:329px;top:391px;width:86px;height:25px;"></div>
<div class="a t " style="left:335px;top:394px;">비급여(진료)</div>
<div class="a cell val" style="left:414px;top:391px;width:132px;height:25px;"></div>
<div class="a cell lab" style="left:329px;top:415px;width:86px;height:24px;"></div>
<div class="a t " style="left:335px;top:417.5px;">총 할인금액</div>
<div class="a cell val" style="left:414px;top:415px;width:132px;height:24px;"></div>
<div class="a " style="left:551px;top:344px;width:1354px;height:95px;border:1px solid #c4c4c4;background:#fff;"></div>
<div class="a " style="left:552px;top:345px;width:1352px;height:22px;background:linear-gradient(90deg,#f7f9fb,#eef3f8);border-bottom:1px solid #c8c8c8;"></div>
<div class="a btn" style="left:1830px;top:345px;width:69px;height:21px;"></div>
<div class="a t " style="left:1830px;top:347.5px;width:69px;text-align:center;color:#1d3a66;">전체보기</div>
<div class="a " style="left:115px;top:444px;width:1790px;height:80px;background:#fff;border:1px solid #b4b4b4;"></div>
<div class="a " style="left:115px;top:444px;width:81px;height:24px;border:1px solid #c8c8c8;background:#f0f0ea;"></div>
<div class="a " style="left:115px;top:467px;width:81px;height:21px;border:1px solid #c8c8c8;background:#fff;"></div>
<div class="a t " style="left:115px;top:446.5px;width:80px;text-align:center;">구분</div>
<div class="a " style="left:195px;top:444px;width:127px;height:24px;border:1px solid #c8c8c8;background:#f0f0ea;"></div>
<div class="a " style="left:195px;top:467px;width:127px;height:21px;border:1px solid #c8c8c8;background:#fff;"></div>
<div class="a t " style="left:195px;top:446.5px;width:126px;text-align:center;">담당의사</div>
<div class="a " style="left:321px;top:444px;width:159px;height:24px;border:1px solid #c8c8c8;background:#f0f0ea;"></div>
<div class="a " style="left:321px;top:467px;width:159px;height:21px;border:1px solid #c8c8c8;background:#fff;"></div>
<div class="a t " style="left:321px;top:446.5px;width:158px;text-align:center;">항목구분</div>
<div class="a " style="left:479px;top:444px;width:162px;height:24px;border:1px solid #c8c8c8;background:#f0f0ea;"></div>
<div class="a " style="left:479px;top:467px;width:162px;height:21px;border:1px solid #c8c8c8;background:#fff;"></div>
<div class="a " style="left:640px;top:444px;width:161px;height:24px;border:1px solid #c8c8c8;background:#f0f0ea;"></div>
<div class="a " style="left:640px;top:467px;width:161px;height:21px;border:1px solid #c8c8c8;background:#fff;"></div>
<div class="a " style="left:800px;top:444px;width:161px;height:24px;border:1px solid #c8c8c8;background:#f0f0ea;"></div>
<div class="a " style="left:800px;top:467px;width:161px;height:21px;border:1px solid #c8c8c8;background:#fff;"></div>
<div class="a " style="left:960px;top:444px;width:161px;height:24px;border:1px solid #c8c8c8;background:#f0f0ea;"></div>
<div class="a " style="left:960px;top:467px;width:161px;height:21px;border:1px solid #c8c8c8;background:#fff;"></div>
<div class="a " style="left:1120px;top:444px;width:161px;height:24px;border:1px solid #c8c8c8;background:#f0f0ea;"></div>
<div class="a " style="left:1120px;top:467px;width:161px;height:21px;border:1px solid #c8c8c8;background:#fff;"></div>
<div class="a " style="left:1280px;top:444px;width:66px;height:24px;border:1px solid #c8c8c8;background:#f0f0ea;"></div>
<div class="a " style="left:1280px;top:467px;width:66px;height:21px;border:1px solid #c8c8c8;background:#fff;"></div>
<div class="a " style="left:1345px;top:444px;width:175px;height:24px;border:1px solid #c8c8c8;background:#f0f0ea;"></div>
<div class="a " style="left:1345px;top:467px;width:175px;height:21px;border:1px solid #c8c8c8;background:#fff;"></div>
<div class="a t " style="left:1345px;top:446.5px;width:174px;text-align:center;">수납금액</div>
<div class="a " style="left:1519px;top:444px;width:174px;height:24px;border:1px solid #c8c8c8;background:#f0f0ea;"></div>
<div class="a " style="left:1519px;top:467px;width:174px;height:21px;border:1px solid #c8c8c8;background:#fff;"></div>
<div class="a t " style="left:1519px;top:446.5px;width:173px;text-align:center;">선수차감</div>
<div class="a " style="left:1692px;top:444px;width:175px;height:24px;border:1px solid #c8c8c8;background:#f0f0ea;"></div>
<div class="a " style="left:1692px;top:467px;width:175px;height:21px;border:1px solid #c8c8c8;background:#fff;"></div>
<div class="a t " style="left:1692px;top:446.5px;width:174px;text-align:center;">VAT</div>
<div class="a " style="left:1866px;top:444px;width:21px;height:24px;border:1px solid #c8c8c8;background:#f0f0ea;"></div>
<div class="a " style="left:1866px;top:467px;width:21px;height:21px;border:1px solid #c8c8c8;background:#fff;"></div>
<div class="a t " style="left:118px;top:468px;color:#333;">미수추가</div>
<div class="a t " style="left:199px;top:468px;color:#333;">김지훈</div>
<div class="a t " style="left:324px;top:468px;color:#333;">기본</div>
<div class="a t " style="right:405px;top:468px;text-align:right;color:#333;">0</div>
<div class="a t " style="right:232px;top:468px;text-align:right;color:#333;">0</div>
<div class="a t " style="right:58px;top:468px;text-align:right;color:#333;">0</div>
<div class="a " style="left:1886px;top:467px;width:18px;height:56px;background:#f0f0f0;"></div>
<div class="a cell lab" style="left:115px;top:529px;width:86px;height:32px;"></div>
<div class="a t " style="left:121px;top:537px;">수납자</div>
<div class="a cell val" style="left:200px;top:529px;width:76px;height:32px;"></div>
<div class="a t " style="left:200px;top:537px;width:76px;text-align:center;">김지훈</div>
<div class="a cell lab" style="left:275px;top:529px;width:86px;height:32px;"></div>
<div class="a t " style="left:281px;top:537px;">부가세</div>
<div class="a cell val" style="left:360px;top:529px;width:186px;height:32px;"></div>
<div class="a cell val" style="left:1400px;top:529px;width:176px;height:32px;"></div>
<div class="a t " style="right:352px;top:537px;text-align:right;font-weight:bold;font-size:15px;letter-spacing:1px;">2,004,580</div>
<div class="a cell lab" style="left:1580px;top:529px;width:86px;height:32px;"></div>
<div class="a t " style="left:1585px;top:537px;font-weight:bold;">받을금액</div>
<div class="a cell val" style="left:1665px;top:529px;width:240px;height:32px;"></div>
<div class="a t " style="left:1673px;top:537px;font-weight:bold;font-size:15px;color:#1414c8;letter-spacing:1px;">100,000</div>
<div class="a " style="left:126px;top:573px;width:14px;height:14px;background:#eee;border:1px solid #d4d4d4;border-radius:2px;"><svg width="12" height="12" viewBox="0 0 12 12"><path d="M2 6 L5 9 L10 3" fill="none" stroke="#cfcfcf" stroke-width="1.6"/></svg></div>
<div class="a t " style="left:146px;top:572px;word-spacing:3px;">소득공제 제출 제외</div>
<div class="a " style="left:265px;top:573px;width:14px;height:14px;background:#eee;border:1px solid #d4d4d4;border-radius:2px;"><svg width="12" height="12" viewBox="0 0 12 12"><path d="M2 6 L5 9 L10 3" fill="none" stroke="#cfcfcf" stroke-width="1.6"/></svg></div>
<div class="a t " style="left:285px;top:572px;word-spacing:3px;">미수금 산정 시 제외</div>
<div class="a " style="left:410px;top:573px;width:14px;height:14px;background:#eee;border:1px solid #d4d4d4;border-radius:2px;"><svg width="12" height="12" viewBox="0 0 12 12"><path d="M2 6 L5 9 L10 3" fill="none" stroke="#cfcfcf" stroke-width="1.6"/></svg></div>
<div class="a t " style="left:430px;top:572px;word-spacing:3px;">수납 계획</div>
<div class="a btn" style="left:1481px;top:569px;width:36px;height:23px;"></div>
<svg class="a" style="left:1490px;top:573px" width="18" height="15" viewBox="0 0 18 15"><rect x="4" y="1" width="10" height="4" fill="none" stroke="#666" stroke-width="1.5"/><rect x="1.5" y="5" width="15" height="6" rx="2" fill="none" stroke="#666" stroke-width="1.5"/><rect x="4" y="9" width="10" height="5" fill="#fff" stroke="#666" stroke-width="1.5"/></svg>
<div class="a btn" style="left:1523px;top:569px;width:80px;height:23px;"></div>
<div class="a t " style="left:1523px;top:571.5px;width:80px;text-align:center;color:#1d3a66;">영수증</div>
<div class="a btn" style="left:1621px;top:569px;width:30px;height:23px;"></div>
<div class="a t " style="left:1621px;top:571.5px;width:30px;text-align:center;color:#1d3a66;">· · ·</div>
<div class="a btn" style="left:1655px;top:569px;width:79px;height:23px;"></div>
<div class="a t " style="left:1655px;top:571.5px;width:79px;text-align:center;color:#1d3a66;">카드수납</div>
<div class="a " style="left:1737px;top:569px;width:80px;height:23px;background:linear-gradient(#5f88bb,#4a72a5);border:1px solid #3b5f8e;border-radius:3px;"></div>
<div class="a t " style="left:1737px;top:571.5px;width:80px;text-align:center;color:#fff;">현금수납</div>
<div class="a " style="left:1820px;top:569px;width:80px;height:23px;background:linear-gradient(#d0687e,#b94e66);border:1px solid #9c3a52;border-radius:3px;"></div>
<div class="a t " style="left:1820px;top:571.5px;width:80px;text-align:center;color:#fff;">상세수납</div>
<div class="a " style="left:105px;top:606px;width:1810px;height:406px;background:#ebeceb;border:1px solid #c0c0c0;border-radius:3px;"></div>
<div class="a " style="left:106px;top:607px;width:1808px;height:31px;background:linear-gradient(#ffffff,#f0f0f0);border-bottom:1px solid #c4c4c4;border-radius:3px 3px 0 0;"></div>
<div class="a t " style="left:111px;top:612px;word-spacing:2px;">수납 환자목록 ( 1 )</div>
<div class="a t " style="left:117px;top:645px;">일자</div>
<div class="a " style="left:148px;top:644px;width:95px;height:20px;background:#fff;border:1px solid #b8b8b8;"></div>
<div class="a t " style="left:152px;top:646px;font-size:11.5px;">2020-12-22</div>
<div class="a " style="left:219px;top:645px;width:20px;height:18px;background:linear-gradient(#fff,#ddd);border:1px solid #888;"><div style="position:absolute;left:0;top:0;width:18px;height:4px;background:#3a7ac0"></div><div class="t" style="position:absolute;left:2px;top:3px;font-size:10px;font-weight:bold;color:#333">15</div></div>
<div class="a " style="left:251px;top:644px;width:18px;height:18px;background:#5a78e6;"></div>
<div class="a t " style="left:251px;top:645px;width:18px;text-align:center;color:#ffea00;">T</div>
<div class="a " style="left:284px;top:644px;width:70px;height:20px;background:linear-gradient(#7aaae0,#5e92d0);border:1px solid #5a8ac8;border-radius:3px 0 0 3px;"></div>
<div class="a t " style="left:284px;top:646px;width:70px;text-align:center;color:#fff;word-spacing:1px;">전체 ( 1 )</div>
<div class="a " style="left:354px;top:644px;width:86px;height:20px;background:linear-gradient(#fff,#f0f0f0);border:1px solid #c8c8c8;"></div>
<div class="a t " style="left:354px;top:646px;width:86px;text-align:center;color:#777;">수납대기</div>
<div class="a " style="left:440px;top:644px;width:50px;height:20px;background:linear-gradient(#fff,#f0f0f0);border:1px solid #c8c8c8;"></div>
<div class="a t " style="left:458px;top:646px;color:#777;">수납완료</div>
<div class="a " style="left:1818px;top:644px;width:45px;height:21px;background:linear-gradient(#fff,#f0f0f0);border:1px solid #c0c0c0;border-radius:3px 0 0 3px;"></div>
<div class="a t " style="left:1818px;top:646.5px;width:45px;text-align:center;color:#777;">기본</div>
<div class="a " style="left:1862px;top:644px;width:45px;height:21px;background:linear-gradient(#7aaee4,#5e96d6);border:1px solid #5a8ac8;border-radius:0 3px 3px 0;"></div>
<div class="a t " style="left:1862px;top:646.5px;width:45px;text-align:center;color:#fff;">상세</div>
<div class="a " style="left:106px;top:670px;width:1808px;height:301px;background:#fff;border-top:1px solid #c8c8c8;border-bottom:1px solid #b0b0b0;"></div>
<div class="a " style="left:106px;top:670px;width:71px;height:23px;border:1px solid #c8c8c8;background:#f0f0ea;"></div>
<div class="a " style="left:106px;top:692px;width:71px;height:25px;border:1px solid #d4d4d4;background:#e4e5e8;"></div>
<div class="a t " style="left:106px;top:672.5px;width:70px;text-align:center;">수납상태</div>
<div class="a " style="left:176px;top:670px;width:111px;height:23px;border:1px solid #c8c8c8;background:#f0f0ea;"></div>
<div class="a " style="left:176px;top:692px;width:111px;height:25px;border:1px solid #d4d4d4;background:#e4e5e8;"></div>
<div class="a t " style="left:176px;top:672.5px;width:110px;text-align:center;">수납일시</div>
<div class="a " style="left:286px;top:670px;width:86px;height:23px;border:1px solid #c8c8c8;background:#f0f0ea;"></div>
<div class="a " style="left:286px;top:692px;width:86px;height:25px;border:1px solid #d4d4d4;background:#e4e5e8;"></div>
<div class="a t " style="left:286px;top:672.5px;width:85px;text-align:center;">구분</div>
<div class="a " style="left:371px;top:670px;width:81px;height:23px;border:1px solid #c8c8c8;background:#f0f0ea;"></div>
<div class="a " style="left:371px;top:692px;width:81px;height:25px;border:1px solid #d4d4d4;background:#e4e5e8;"></div>
<div class="a t " style="left:371px;top:672.5px;width:80px;text-align:center;">차트번호</div>
<div class="a " style="left:451px;top:670px;width:71px;height:23px;border:1px solid #c8c8c8;background:#f0f0ea;"></div>
<div class="a " style="left:451px;top:692px;width:71px;height:25px;border:1px solid #d4d4d4;background:#e4e5e8;"></div>
<div class="a t " style="left:451px;top:672.5px;width:70px;text-align:center;">환자명</div>
<div class="a " style="left:521px;top:670px;width:180px;height:23px;border:1px solid #c8c8c8;background:#f0f0ea;"></div>
<div class="a " style="left:521px;top:692px;width:180px;height:25px;border:1px solid #d4d4d4;background:#e4e5e8;"></div>
<div class="a " style="left:700px;top:670px;width:161px;height:23px;border:1px solid #c8c8c8;background:#f0f0ea;"></div>
<div class="a " style="left:700px;top:692px;width:161px;height:25px;border:1px solid #d4d4d4;background:#e4e5e8;"></div>
<div class="a " style="left:860px;top:670px;width:141px;height:23px;border:1px solid #c8c8c8;background:#f0f0ea;"></div>
<div class="a " style="left:860px;top:692px;width:141px;height:25px;border:1px solid #d4d4d4;background:#e4e5e8;"></div>
<div class="a " style="left:1000px;top:670px;width:141px;height:23px;border:1px solid #c8c8c8;background:#f0f0ea;"></div>
<div class="a " style="left:1000px;top:692px;width:141px;height:25px;border:1px solid #d4d4d4;background:#e4e5e8;"></div>
<div class="a " style="left:1140px;top:670px;width:237px;height:23px;border:1px solid #c8c8c8;background:#f0f0ea;"></div>
<div class="a " style="left:1140px;top:692px;width:237px;height:25px;border:1px solid #d4d4d4;background:#e4e5e8;"></div>
<div class="a " style="left:1376px;top:670px;width:97px;height:23px;border:1px solid #c8c8c8;background:#f0f0ea;"></div>
<div class="a " style="left:1376px;top:692px;width:97px;height:25px;border:1px solid #d4d4d4;background:#e4e5e8;"></div>
<div class="a t " style="left:1376px;top:672.5px;width:96px;text-align:center;">미수금</div>
<div class="a " style="left:1472px;top:670px;width:96px;height:23px;border:1px solid #c8c8c8;background:#f0f0ea;"></div>
<div class="a " style="left:1472px;top:692px;width:96px;height:25px;border:1px solid #d4d4d4;background:#e4e5e8;"></div>
<div class="a t " style="left:1472px;top:672.5px;width:95px;text-align:center;">선수금</div>
<div class="a " style="left:1567px;top:670px;width:96px;height:23px;border:1px solid #c8c8c8;background:#f0f0ea;"></div>
<div class="a " style="left:1567px;top:692px;width:96px;height:25px;border:1px solid #d4d4d4;background:#e4e5e8;"></div>
<div class="a t " style="left:1567px;top:672.5px;width:95px;text-align:center;">VAT</div>
<div class="a " style="left:1662px;top:670px;width:96px;height:23px;border:1px solid #c8c8c8;background:#f0f0ea;"></div>
<div class="a " style="left:1662px;top:692px;width:96px;height:25px;border:1px solid #d4d4d4;background:#e4e5e8;"></div>
<div class="a t " style="left:1662px;top:672.5px;width:95px;text-align:center;">건생비</div>
<div class="a " style="left:1757px;top:670px;width:71px;height:23px;border:1px solid #c8c8c8;background:#f0f0ea;"></div>
<div class="a " style="left:1757px;top:692px;width:71px;height:25px;border:1px solid #d4d4d4;background:#e4e5e8;"></div>
<div class="a t " style="left:1757px;top:672.5px;width:70px;text-align:center;">수납자</div>
<div class="a " style="left:1827px;top:670px;width:71px;height:23px;border:1px solid #c8c8c8;background:#f0f0ea;"></div>
<div class="a " style="left:1827px;top:692px;width:71px;height:25px;border:1px solid #d4d4d4;background:#e4e5e8;"></div>
<div class="a t " style="left:1827px;top:672.5px;width:70px;text-align:center;">원외처방</div>
<div class="a t " style="left:129px;top:695px;">완료</div>
<div class="a t " style="left:183px;top:695px;font-size:11.5px;">2020-12-22 12:31</div>
<div class="a t " style="left:292px;top:695px;">진료비</div>
<div class="a t " style="left:377px;top:695px;">87</div>
<div class="a t " style="left:456px;top:695px;">김종</div>
<div class="a t " style="right:453px;top:695px;text-align:right;">0</div>
<div class="a t " style="right:358px;top:695px;text-align:right;">0</div>
<div class="a t " style="right:263px;top:695px;text-align:right;">0</div>
<div class="a t " style="right:168px;top:695px;text-align:right;">0</div>
<div class="a t " style="left:1762px;top:695px;">은샘물</div>
<div class="a " style="left:1897px;top:671px;width:17px;height:22px;background:#f0f0ea;border-bottom:1px solid #c8c8c8;"></div>
<div class="a " style="left:1897px;top:694px;width:17px;height:259px;background:#f0f0f0;"></div>
<div class="a " style="left:107px;top:953px;width:1807px;height:17px;background:#efefef;"></div>
<div class="a t " style="left:112px;top:953px;color:#ccc;">‹</div>
<div class="a t " style="left:1885px;top:953px;color:#ccc;">›</div>
<div class="a t " style="left:1901px;top:695px;color:#ccc;font-size:10px;">^</div>
<div class="a t " style="left:1901px;top:936px;color:#ccc;font-size:10px;">ˇ</div>
<div class="a " style="left:106px;top:976px;width:1808px;height:30px;background:#dcf0eb;border-top:1px solid #b4b4b4;border-bottom:1px solid #b4b4b4;"></div>
<div class="a t " style="left:735px;top:982px;width:40px;text-align:center;font-size:11.5px;">0</div>
<div class="a t " style="left:834px;top:982px;width:40px;text-align:center;font-size:11.5px;">0</div>
<div class="a t " style="left:933px;top:982px;width:40px;text-align:center;font-size:11.5px;">0</div>
<div class="a t " style="left:1032px;top:982px;width:40px;text-align:center;font-size:11.5px;">0</div>
<div class="a t " style="left:1132px;top:982px;width:40px;text-align:center;font-size:11.5px;">0</div>
<div class="a t " style="left:1232px;top:982px;width:40px;text-align:center;font-size:11.5px;">0</div>
<div class="a t " style="left:1332px;top:982px;width:40px;text-align:center;font-size:11.5px;">0</div>
<div class="a t " style="left:1432px;top:982px;width:40px;text-align:center;font-size:11.5px;">0</div>
<div class="a t " style="left:1531px;top:982px;width:40px;text-align:center;font-size:11.5px;">0</div>
<div class="a t " style="left:1630px;top:982px;width:40px;text-align:center;font-size:11.5px;">0</div>
<div class="a t " style="left:1730px;top:982px;width:40px;text-align:center;font-size:11.5px;">0</div>
<div class="a " style="left:0px;top:1017px;width:1920px;height:23px;background:#f0f0f0;"></div>
<div class="a " style="left:3px;top:1020px;width:100px;height:20px;border:1px solid #b8b8b8;background:#efeeec;overflow:hidden;"></div>
<div class="a t " style="right:1822px;top:1021px;text-align:right;font-size:11.5px;">1</div>
<div class="a " style="left:102px;top:1020px;width:82px;height:20px;border:1px solid #b8b8b8;background:#efeeec;overflow:hidden;"></div>
<div class="a t " style="left:107px;top:1021px;font-size:11.5px;">무명자</div>
<div class="a " style="left:183px;top:1020px;width:101px;height:20px;border:1px solid #b8b8b8;background:#efeeec;overflow:hidden;"></div>
<div class="a " style="left:283px;top:1020px;width:31px;height:20px;border:1px solid #b8b8b8;background:#efeeec;overflow:hidden;"></div>
<div class="a t " style="left:283px;top:1021px;width:30px;text-align:center;">남</div>
<div class="a " style="left:313px;top:1020px;width:51px;height:20px;border:1px solid #b8b8b8;background:#efeeec;overflow:hidden;"></div>
<div class="a t " style="right:1561px;top:1021px;text-align:right;font-size:11.5px;">40세</div>
<div class="a " style="left:363px;top:1020px;width:71px;height:20px;border:1px solid #b8b8b8;background:#efeeec;overflow:hidden;"></div>
<div class="a t " style="right:1491px;top:1021px;text-align:right;font-size:11.5px;">123456789</div>
<div class="a " style="left:433px;top:1020px;width:71px;height:20px;border:1px solid #b8b8b8;background:#efeeec;overflow:hidden;"></div>
<div class="a t " style="left:438px;top:1021px;font-size:11.5px;">건강보험</div>
<div class="a " style="left:503px;top:1020px;width:101px;height:20px;border:1px solid #b8b8b8;background:#efeeec;overflow:hidden;"></div>
<div class="a t " style="left:508px;top:1021px;font-size:11.5px;">사업장명칭test</div>
<div class="a " style="left:603px;top:1020px;width:83px;height:20px;border:1px solid #b8b8b8;background:#efeeec;overflow:hidden;"></div>
<div class="a t " style="left:608px;top:1021px;font-size:11.5px;">112122121212</div>
<div class="a " style="left:685px;top:1020px;width:79px;height:20px;border:1px solid #b8b8b8;background:#efeeec;overflow:hidden;"></div>
<div class="a t " style="left:690px;top:1021px;font-size:11.5px;">테스트</div>
<div class="a " style="left:763px;top:1020px;width:100px;height:20px;border:1px solid #b8b8b8;background:#efeeec;overflow:hidden;"></div>
<div class="a t " style="left:768px;top:1021px;font-size:11.5px;">010-1234-5678</div>
<div class="a " style="left:862px;top:1020px;width:1054px;height:20px;border:1px solid #b8b8b8;background:#efeeec;overflow:hidden;"></div>
<div class="a " style="left:186px;top:1025px;width:86px;height:9px;background:linear-gradient(90deg,#999,#aaa 30%,#e0e0e0 40%,#b8b8b8 55%,#ccc 100%);filter:blur(1.2px);"></div>
<div class="a " style="left:0px;top:1040px;width:1920px;height:3px;background:#243848;"></div>
<div class="a " style="left:48px;top:1040px;width:344px;height:3px;background:#e8e8e8;"></div>
<div class="a " style="left:786px;top:1040px;width:48px;height:3px;background:#4c5e6c;"></div>
<div class="a " style="left:486px;top:246px;width:945px;height:549px;background:#fff;box-shadow:0 0 12px 4px rgba(0,0,0,.32);"></div>
<svg class="a" style="left:491px;top:252px" width="16" height="12" viewBox="0 0 16 12"><rect x="0.5" y="0.5" width="14" height="11" fill="#f4f6f8" stroke="#8a9aa8"/><rect x="3" y="4" width="1.6" height="6" fill="#3a8ac8"/><rect x="5.5" y="3" width="1.6" height="7" fill="#3aa060"/><rect x="8" y="5" width="1.6" height="5" fill="#d05030"/><rect x="10.5" y="4" width="1.6" height="6" fill="#c8c8c8"/></svg>
<div class="a t " style="left:512px;top:249.5px;color:#111;word-spacing:1px;">진료비 수납내역</div>
<svg class="a" style="left:1410px;top:251px" width="14" height="14" viewBox="0 0 14 14"><path d="M1 1 L13 13 M13 1 L1 13" stroke="#222" stroke-width="1.4"/></svg>
<div class="a " style="left:488px;top:271px;width:941px;height:40px;background:linear-gradient(#e6e9ee 85%,#d6d9de);"></div>
<div class="a t " style="left:498px;top:282px;color:#555;word-spacing:2px;">진료비 수납내역을 확인할 수 있습니다.</div>
<div class="a " style="left:1342px;top:279px;width:80px;height:24px;background:linear-gradient(#fffaf0,#f8ebc8);border:1px solid #e2c58a;border-radius:3px;"></div>
<svg class="a" style="left:1357px;top:282px" width="18" height="17" viewBox="0 0 18 17"><defs><linearGradient id="pg" x1="0" y1="0" x2="0" y2="1"><stop offset="0" stop-color="#f4f8fc"/><stop offset="1" stop-color="#98aec8"/></linearGradient></defs><path d="M6 1 H16 L14 7 H4 Z" fill="#fff" stroke="#5a6a80" stroke-width="1"/><path d="M7 3 H14 M6.5 5 H13" stroke="#9aa8b8" stroke-width="0.8"/><path d="M2 8.5 Q2 7 3.5 7 H15 Q16.5 7 16.5 8.5 V14.5 H2 Z" fill="url(#pg)" stroke="#3e5474" stroke-width="1"/><rect x="2.5" y="12" width="13.5" height="3" fill="#e8eef4" stroke="#3e5474" stroke-width="0.8"/><rect x="11.5" y="10.2" width="1.6" height="1.4" fill="#30a040"/></svg>
<div class="a t " style="left:1381px;top:282.5px;color:#2a5894;font-weight:bold;font-size:13px;">출력</div>
<div class="a " style="left:498px;top:321px;width:924px;height:461px;background:#fff;border:1px solid #a8a8a8;"></div>
<div class="a " style="left:499px;top:322px;width:922px;height:23px;background:#f0f0ea;border-bottom:1px solid #c8c8c8;"></div>
<div class="a " style="left:529px;top:322px;width:1px;height:23px;background:#c8c8c8;"></div>
<div class="a t " style="left:529px;top:325.5px;width:65px;text-align:center;">수납구분</div>
<div class="a " style="left:594px;top:322px;width:1px;height:23px;background:#c8c8c8;"></div>
<div class="a t " style="left:594px;top:325.5px;width:75px;text-align:center;">발생구분</div>
<div class="a " style="left:669px;top:322px;width:1px;height:23px;background:#c8c8c8;"></div>
<div class="a t " style="left:669px;top:325.5px;width:70px;text-align:center;">수납일자</div>
<div class="a " style="left:739px;top:322px;width:1px;height:23px;background:#c8c8c8;"></div>
<div class="a t " style="left:739px;top:325.5px;width:70px;text-align:center;">발생일자</div>
<div class="a " style="left:809px;top:322px;width:1px;height:23px;background:#c8c8c8;"></div>
<div class="a t " style="left:809px;top:325.5px;width:100px;text-align:center;">수납과</div>
<div class="a " style="left:909px;top:322px;width:1px;height:23px;background:#c8c8c8;"></div>
<div class="a t " style="left:909px;top:325.5px;width:99px;text-align:center;">수납대상액</div>
<div class="a " style="left:1008px;top:322px;width:1px;height:23px;background:#c8c8c8;"></div>
<div class="a t " style="left:1008px;top:325.5px;width:99px;text-align:center;">수납금액</div>
<div class="a " style="left:1107px;top:322px;width:1px;height:23px;background:#c8c8c8;"></div>
<div class="a t " style="left:1107px;top:325.5px;width:98px;text-align:center;">발생액</div>
<div class="a " style="left:1205px;top:322px;width:1px;height:23px;background:#c8c8c8;"></div>
<div class="a t " style="left:1205px;top:325.5px;width:99px;text-align:center;">미수잔액</div>
<div class="a " style="left:1304px;top:322px;width:1px;height:23px;background:#c8c8c8;"></div>
<div class="a t " style="left:1304px;top:325.5px;width:100px;text-align:center;">환불잔액</div>
<div class="a " style="left:1404px;top:322px;width:1px;height:23px;background:#c8c8c8;"></div>
<div class="a " style="left:1405px;top:322px;width:16px;height:23px;background:#f0f0ea;"></div>
<div class="a " style="left:529px;top:345px;width:875px;height:23px;background:#f5eba8;border-bottom:2px solid #fff;"></div>
<div class="a t " style="left:535px;top:347.5px;">진료비</div>
<div class="a t " style="left:600px;top:347.5px;">보험</div>
<div class="a t " style="left:674px;top:347.5px;font-size:11.5px;">2020-12-09</div>
<div class="a t " style="left:814px;top:347.5px;">내과</div>
<div class="a t " style="right:917px;top:347.5px;text-align:right;font-size:11.5px;">3,400</div>
<div class="a t " style="right:818px;top:347.5px;text-align:right;font-size:11.5px;">0</div>
<div class="a t " style="right:621px;top:347.5px;text-align:right;font-size:11.5px;">3,400</div>
<div class="a t " style="right:522px;top:347.5px;text-align:right;font-size:11.5px;">0</div>
<div class="a " style="left:529px;top:368px;width:875px;height:23px;background:#f5eba8;border-bottom:2px solid #fff;"></div>
<div class="a t " style="left:535px;top:370.5px;">진료비</div>
<div class="a t " style="left:600px;top:370.5px;">보험</div>
<div class="a t " style="left:674px;top:370.5px;font-size:11.5px;">2020-12-07</div>
<div class="a t " style="left:814px;top:370.5px;">내과</div>
<div class="a t " style="right:917px;top:370.5px;text-align:right;font-size:11.5px;">3,400</div>
<div class="a t " style="right:818px;top:370.5px;text-align:right;font-size:11.5px;">0</div>
<div class="a t " style="right:621px;top:370.5px;text-align:right;font-size:11.5px;">3,400</div>
<div class="a t " style="right:522px;top:370.5px;text-align:right;font-size:11.5px;">0</div>
<div class="a " style="left:529px;top:391px;width:875px;height:23px;background:#f5eba8;border-bottom:2px solid #fff;"></div>
<div class="a t " style="left:535px;top:393.5px;">진료비</div>
<div class="a t " style="left:600px;top:393.5px;">보험</div>
<div class="a t " style="left:674px;top:393.5px;font-size:11.5px;">2020-11-23</div>
<div class="a t " style="left:814px;top:393.5px;">내과</div>
<div class="a t " style="right:917px;top:393.5px;text-align:right;font-size:11.5px;">134,200</div>
<div class="a t " style="right:818px;top:393.5px;text-align:right;font-size:11.5px;">0</div>
<div class="a t " style="right:621px;top:393.5px;text-align:right;font-size:11.5px;">134,200</div>
<div class="a t " style="right:522px;top:393.5px;text-align:right;font-size:11.5px;">0</div>
<div class="a " style="left:529px;top:414px;width:875px;height:23px;background:#f5eba8;border-bottom:2px solid #fff;"></div>
<div class="a t " style="left:535px;top:416.5px;">진료비</div>
<div class="a t " style="left:600px;top:416.5px;">비보험</div>
<div class="a t " style="left:674px;top:416.5px;font-size:11.5px;">2020-11-23</div>
<div class="a t " style="left:814px;top:416.5px;">내과</div>
<div class="a t " style="right:917px;top:416.5px;text-align:right;font-size:11.5px;">52,000</div>
<div class="a t " style="right:818px;top:416.5px;text-align:right;font-size:11.5px;">0</div>
<div class="a t " style="right:621px;top:416.5px;text-align:right;font-size:11.5px;">52,000</div>
<div class="a t " style="right:522px;top:416.5px;text-align:right;font-size:11.5px;">0</div>
<div class="a " style="left:529px;top:437px;width:875px;height:23px;background:#f5eba8;border-bottom:2px solid #fff;"></div>
<div class="a t " style="left:535px;top:439.5px;">진료비</div>
<div class="a t " style="left:600px;top:439.5px;">보험</div>
<div class="a t " style="left:674px;top:439.5px;font-size:11.5px;">2020-11-19</div>
<div class="a t " style="left:814px;top:439.5px;">내과</div>
<div class="a t " style="right:917px;top:439.5px;text-align:right;font-size:11.5px;">700,000</div>
<div class="a t " style="right:818px;top:439.5px;text-align:right;font-size:11.5px;">0</div>
<div class="a t " style="right:621px;top:439.5px;text-align:right;font-size:11.5px;">700,000</div>
<div class="a t " style="right:522px;top:439.5px;text-align:right;font-size:11.5px;">0</div>
<div class="a " style="left:529px;top:460px;width:875px;height:23px;background:#f5eba8;border-bottom:2px solid #fff;"></div>
<div class="a t " style="left:535px;top:462.5px;">진료비</div>
<div class="a t " style="left:600px;top:462.5px;">비보험</div>
<div class="a t " style="left:674px;top:462.5px;font-size:11.5px;">2020-11-19</div>
<div class="a t " style="left:814px;top:462.5px;">내과</div>
<div class="a t " style="right:917px;top:462.5px;text-align:right;font-size:11.5px;">0</div>
<div class="a t " style="right:818px;top:462.5px;text-align:right;font-size:11.5px;">0</div>
<div class="a t " style="right:621px;top:462.5px;text-align:right;font-size:11.5px;">0</div>
<div class="a t " style="right:522px;top:462.5px;text-align:right;font-size:11.5px;">0</div>
<div class="a " style="left:529px;top:483px;width:875px;height:23px;background:#f5eba8;border-bottom:2px solid #fff;"></div>
<div class="a t " style="left:535px;top:485.5px;">진료비</div>
<div class="a t " style="left:600px;top:485.5px;">보험</div>
<div class="a t " style="left:674px;top:485.5px;font-size:11.5px;">2020-11-18</div>
<div class="a t " style="left:814px;top:485.5px;">내과</div>
<div class="a t " style="right:917px;top:485.5px;text-align:right;font-size:11.5px;">3,700</div>
<div class="a t " style="right:818px;top:485.5px;text-align:right;font-size:11.5px;">0</div>
<div class="a t " style="right:621px;top:485.5px;text-align:right;font-size:11.5px;">3,700</div>
<div class="a t " style="right:522px;top:485.5px;text-align:right;font-size:11.5px;">0</div>
<div class="a " style="left:529px;top:506px;width:875px;height:23px;background:#f5eba8;border-bottom:2px solid #fff;"></div>
<div class="a t " style="left:535px;top:508.5px;">진료비</div>
<div class="a t " style="left:600px;top:508.5px;">보험</div>
<div class="a t " style="left:674px;top:508.5px;font-size:11.5px;">2020-11-11</div>
<div class="a t " style="left:814px;top:508.5px;">내과</div>
<div class="a t " style="right:917px;top:508.5px;text-align:right;font-size:11.5px;">3,400</div>
<div class="a t " style="right:818px;top:508.5px;text-align:right;font-size:11.5px;">0</div>
<div class="a t " style="right:621px;top:508.5px;text-align:right;font-size:11.5px;">3,400</div>
<div class="a t " style="right:522px;top:508.5px;text-align:right;font-size:11.5px;">0</div>
<div class="a " style="left:529px;top:529px;width:875px;height:23px;background:#f5eba8;border-bottom:2px solid #fff;"></div>
<div class="a t " style="left:535px;top:531.5px;">진료비</div>
<div class="a t " style="left:600px;top:531.5px;">보험</div>
<div class="a t " style="left:674px;top:531.5px;font-size:11.5px;">2020-11-06</div>
<div class="a t " style="left:814px;top:531.5px;">내과</div>
<div class="a t " style="right:917px;top:531.5px;text-align:right;font-size:11.5px;">400,600</div>
<div class="a t " style="right:818px;top:531.5px;text-align:right;font-size:11.5px;">0</div>
<div class="a t " style="right:621px;top:531.5px;text-align:right;font-size:11.5px;">400,600</div>
<div class="a t " style="right:522px;top:531.5px;text-align:right;font-size:11.5px;">0</div>
<div class="a " style="left:529px;top:552px;width:875px;height:23px;background:#f5eba8;border-bottom:2px solid #fff;"></div>
<div class="a t " style="left:535px;top:554.5px;">진료비</div>
<div class="a t " style="left:600px;top:554.5px;">보험</div>
<div class="a t " style="left:674px;top:554.5px;font-size:11.5px;">2020-11-04</div>
<div class="a t " style="left:814px;top:554.5px;">이비인후과</div>
<div class="a t " style="right:917px;top:554.5px;text-align:right;font-size:11.5px;">3,400</div>
<div class="a t " style="right:818px;top:554.5px;text-align:right;font-size:11.5px;">0</div>
<div class="a t " style="right:621px;top:554.5px;text-align:right;font-size:11.5px;">3,400</div>
<div class="a t " style="right:522px;top:554.5px;text-align:right;font-size:11.5px;">0</div>
<div class="a " style="left:529px;top:575px;width:875px;height:23px;background:#f5eba8;border-bottom:2px solid #fff;"></div>
<div class="a t " style="left:535px;top:577.5px;">진료비</div>
<div class="a t " style="left:600px;top:577.5px;">보험</div>
<div class="a t " style="left:674px;top:577.5px;font-size:11.5px;">2020-10-30</div>
<div class="a t " style="left:814px;top:577.5px;">내과</div>
<div class="a t " style="right:917px;top:577.5px;text-align:right;font-size:11.5px;">12,100</div>
<div class="a t " style="right:818px;top:577.5px;text-align:right;font-size:11.5px;">12,100</div>
<div class="a t " style="right:621px;top:577.5px;text-align:right;font-size:11.5px;">0</div>
<div class="a t " style="right:522px;top:577.5px;text-align:right;font-size:11.5px;">12,100</div>
<div class="a " style="left:529px;top:598px;width:875px;height:23px;background:#f5eba8;border-bottom:2px solid #fff;"></div>
<div class="a t " style="left:535px;top:600.5px;">진료비</div>
<div class="a t " style="left:600px;top:600.5px;">보험</div>
<div class="a t " style="left:674px;top:600.5px;font-size:11.5px;">2020-10-26</div>
<div class="a t " style="left:814px;top:600.5px;">내과</div>
<div class="a t " style="right:917px;top:600.5px;text-align:right;font-size:11.5px;">12,100</div>
<div class="a t " style="right:818px;top:600.5px;text-align:right;font-size:11.5px;">12,100</div>
<div class="a t " style="right:621px;top:600.5px;text-align:right;font-size:11.5px;">0</div>
<div class="a t " style="right:522px;top:600.5px;text-align:right;font-size:11.5px;">12,100</div>
<div class="a " style="left:529px;top:621px;width:875px;height:23px;background:#f5f5f5;border-bottom:1px solid #fff;"></div>
<div class="a " style="left:597px;top:624px;width:69px;height:16px;background:#f7a44a;border-radius:5px;"></div>
<div class="a t " style="left:597px;top:623.5px;width:69px;text-align:center;color:#fff;">불만환불</div>
<div class="a t " style="left:744px;top:623.5px;font-size:11.5px;">2020-10-26</div>
<div class="a t " style="left:814px;top:623.5px;">내과</div>
<div class="a t " style="right:719px;top:623.5px;text-align:right;font-size:11.5px;">12,100</div>
<div class="a t " style="right:621px;top:623.5px;text-align:right;font-size:11.5px;">0</div>
<div class="a t " style="right:522px;top:623.5px;text-align:right;font-size:11.5px;">0</div>
<div class="a " style="left:529px;top:644px;width:875px;height:23px;background:#f5f5f5;border-bottom:1px solid #fff;"></div>
<div class="a " style="left:597px;top:647px;width:69px;height:16px;background:#5cb85c;border-radius:5px;"></div>
<div class="a t " style="left:597px;top:646.5px;width:69px;text-align:center;color:#fff;">환불정산</div>
<div class="a t " style="left:744px;top:646.5px;font-size:11.5px;">2020-10-26</div>
<div class="a t " style="left:814px;top:646.5px;">내과</div>
<div class="a t " style="right:719px;top:646.5px;text-align:right;font-size:11.5px;">500</div>
<div class="a t " style="right:621px;top:646.5px;text-align:right;font-size:11.5px;">0</div>
<div class="a t " style="right:522px;top:646.5px;text-align:right;font-size:11.5px;">0</div>
<div class="a " style="left:529px;top:667px;width:875px;height:23px;background:#f5eba8;border-bottom:2px solid #fff;"></div>
<div class="a t " style="left:535px;top:669.5px;">진료비</div>
<div class="a t " style="left:600px;top:669.5px;">비보험</div>
<div class="a t " style="left:674px;top:669.5px;font-size:11.5px;">2020-10-24</div>
<div class="a t " style="left:814px;top:669.5px;">내과</div>
<div class="a t " style="right:917px;top:669.5px;text-align:right;font-size:11.5px;">14,360</div>
<div class="a t " style="right:818px;top:669.5px;text-align:right;font-size:11.5px;">0</div>
<div class="a t " style="right:621px;top:669.5px;text-align:right;font-size:11.5px;">14,360</div>
<div class="a t " style="right:522px;top:669.5px;text-align:right;font-size:11.5px;">0</div>
<div class="a " style="left:529px;top:690px;width:875px;height:23px;background:#f5eba8;border-bottom:2px solid #fff;"></div>
<div class="a t " style="left:535px;top:692.5px;">진료비</div>
<div class="a t " style="left:600px;top:692.5px;">보험</div>
<div class="a t " style="left:674px;top:692.5px;font-size:11.5px;">2020-10-24</div>
<div class="a t " style="left:814px;top:692.5px;">내과</div>
<div class="a t " style="right:917px;top:692.5px;text-align:right;font-size:11.5px;">6,000</div>
<div class="a t " style="right:818px;top:692.5px;text-align:right;font-size:11.5px;">0</div>
<div class="a t " style="right:621px;top:692.5px;text-align:right;font-size:11.5px;">6,000</div>
<div class="a t " style="right:522px;top:692.5px;text-align:right;font-size:11.5px;">0</div>
<div class="a " style="left:529px;top:713px;width:875px;height:23px;background:#f5eba8;border-bottom:2px solid #fff;"></div>
<div class="a t " style="left:535px;top:715.5px;">진료비</div>
<div class="a t " style="left:600px;top:715.5px;">보험</div>
<div class="a t " style="left:674px;top:715.5px;font-size:11.5px;">2020-10-19</div>
<div class="a t " style="left:814px;top:715.5px;">내과</div>
<div class="a t " style="right:917px;top:715.5px;text-align:right;font-size:11.5px;">3,900</div>
<div class="a t " style="right:818px;top:715.5px;text-align:right;font-size:11.5px;">0</div>
<div class="a t " style="right:621px;top:715.5px;text-align:right;font-size:11.5px;">3,900</div>
<div class="a t " style="right:522px;top:715.5px;text-align:right;font-size:11.5px;">0</div>
<div class="a " style="left:529px;top:736px;width:875px;height:23px;background:#f5eba8;border-bottom:2px solid #fff;"></div>
<div class="a t " style="left:535px;top:738.5px;">진료비</div>
<div class="a t " style="left:600px;top:738.5px;">보험</div>
<div class="a t " style="left:674px;top:738.5px;font-size:11.5px;">2020-10-19</div>
<div class="a t " style="left:814px;top:738.5px;">내과</div>
<div class="a t " style="right:917px;top:738.5px;text-align:right;font-size:11.5px;">3,700</div>
<div class="a t " style="right:818px;top:738.5px;text-align:right;font-size:11.5px;">0</div>
<div class="a t " style="right:621px;top:738.5px;text-align:right;font-size:11.5px;">3,700</div>
<div class="a t " style="right:522px;top:738.5px;text-align:right;font-size:11.5px;">0</div>
<div class="a " style="left:529px;top:759px;width:875px;height:5px;background:#f5eba8;"></div>
<div class="a " style="left:508px;top:601px;width:12px;height:12px;background:linear-gradient(#e8e8e8,#a8a8a8);border:1px solid #777;border-radius:2px;"><div style="position:absolute;left:2px;top:4px;width:6px;height:2px;background:#fff"></div></div>
<div class="a " style="left:1404px;top:345px;width:17px;height:419px;background:#f0f0f0;"></div>
<div class="a " style="left:1405px;top:362px;width:15px;height:79px;background:#cdcdcd;"></div>
<svg class="a" style="left:1407px;top:752px" width="10" height="7" viewBox="0 0 10 7"><path d="M1 1 L5 5 L9 1" fill="none" stroke="#999" stroke-width="1.2"/></svg>
<svg class="a" style="left:1407px;top:349px" width="10" height="7" viewBox="0 0 10 7"><path d="M1 6 L5 2 L9 6" fill="none" stroke="#999" stroke-width="1.2"/></svg>
<div class="a " style="left:499px;top:764px;width:922px;height:17px;background:#efefef;"></div>
<svg class="a" style="left:505px;top:768px" width="7" height="10" viewBox="0 0 7 10"><path d="M6 1 L2 5 L6 9" fill="none" stroke="#ccc" stroke-width="1.2"/></svg>
<svg class="a" style="left:1393px;top:768px" width="7" height="10" viewBox="0 0 7 10"><path d="M1 1 L5 5 L1 9" fill="none" stroke="#ccc" stroke-width="1.2"/></svg>
<div class="a " style="left:488px;top:791px;width:943px;height:2px;background:#8a8a8a;"></div>
<div class="a " style="left:1430px;top:248px;width:2px;height:545px;background:#8a8a8a;"></div>
<div class="a " style="left:485px;top:245px;width:948px;height:551px;border:2.5px solid #e0141e;"></div>
<div class="a " style="left:445px;top:243px;width:39px;height:39px;background:#d9623b;border-radius:50%;box-shadow:1px 2px 3px rgba(0,0,0,.35);"></div>
<div class="a t " style="left:445px;top:254px;width:39px;text-align:center;color:#fff;font-weight:bold;font-size:18px;">2</div>
</body></html>
